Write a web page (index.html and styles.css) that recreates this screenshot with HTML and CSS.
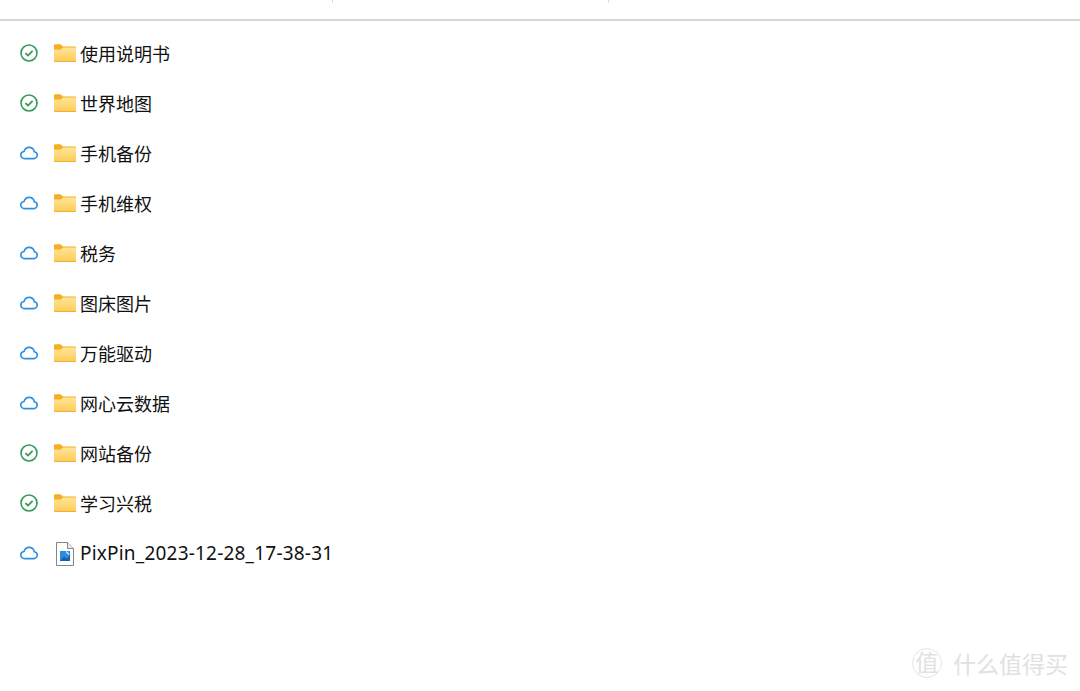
FILE: index.html
```html
<!DOCTYPE html>
<html lang="en">
<head>
    <meta charset="UTF-8">
    <title>文件列表</title>
    <link rel="stylesheet" href="styles.css">
</head>
<body>
    <svg class="defs" width="0" height="0">
        <symbol id="ok" viewBox="0 0 18 18">
            <circle cx="9" cy="9" r="8" fill="none" stroke="#359a55" stroke-width="1.600"/>
            <path d="M5.400 9.100 8 11.600 12.600 6.900" fill="none" stroke="#359a55" stroke-width="1.800"/>
        </symbol>
        <symbol id="cloud" viewBox="0 0 18 18">
            <path d="M4.600 14.600C2.300 14.600.8 12.900.8 11c0-1.800 1.400-3.300 3.200-3.500C4.700 5 6.700 3.400 9.100 3.400c2.700 0 4.700 1.800 5.200 4.300 1.700.2 2.900 1.600 2.900 3.300 0 1.900-1.500 3.600-3.400 3.600z" fill="none" stroke="#2f8fe0" stroke-width="1.600"/>
        </symbol>
        <linearGradient id="folderFill" x1="0" y1="0" x2="0" y2="1">
            <stop offset="0" stop-color="#ffe596"/>
            <stop offset="1" stop-color="#fccb58"/>
        </linearGradient>
        <symbol id="folder" viewBox="0 0 22 18">
            <path d="M0 1.500C0 .8.500.300 1.200.300h5.300L9 2.500h12c.6 0 1 .4 1 1V17c0 .6-.4 1-1 1H1c-.6 0-1-.4-1-1z" fill="#f4b022"/>
            <path d="M0 5.500 7 5.500 9 3.500h12.500c.3 0 .5.200.5.500V17c0 .6-.4 1-1 1H1c-.6 0-1-.4-1-1z" fill="url(#folderFill)"/>
            <path d="M0 17h22v.2c0 .5-.4.800-1 .8H1c-.6 0-1-.3-1-.8z" fill="#eeb02e"/>
        </symbol>
        <symbol id="imgfile" viewBox="0 0 22 24">
            <path d="M2.500.500h11l6 6v17h-17z" fill="#fff" stroke="#858585"/>
            <path d="M13.500.500v6h6" fill="#ececec" stroke="#858585"/>
            <rect x="6" y="9" width="10" height="10" fill="#2f8be0"/>
            <path d="M6 19 10 14.500 13 17 16 13V19z" fill="#1a5fae"/>
            <path d="M12 9.500 15 12.500" stroke="#cfe6ff" stroke-width="1.400"/>
        </symbol>
    </svg>

    <div class="head_bar">
        <span class="head_cell name_col"></span>
        <span class="head_cell date_col"></span>
    </div>

    <ul class="file_list">
        <li><svg class="state"><use href="#ok"/></svg><svg class="type"><use href="#folder"/></svg><span>使用说明书</span></li>
        <li><svg class="state"><use href="#ok"/></svg><svg class="type"><use href="#folder"/></svg><span>世界地图</span></li>
        <li><svg class="state"><use href="#cloud"/></svg><svg class="type"><use href="#folder"/></svg><span>手机备份</span></li>
        <li><svg class="state"><use href="#cloud"/></svg><svg class="type"><use href="#folder"/></svg><span>手机维权</span></li>
        <li><svg class="state"><use href="#cloud"/></svg><svg class="type"><use href="#folder"/></svg><span>税务</span></li>
        <li><svg class="state"><use href="#cloud"/></svg><svg class="type"><use href="#folder"/></svg><span>图床图片</span></li>
        <li><svg class="state"><use href="#cloud"/></svg><svg class="type"><use href="#folder"/></svg><span>万能驱动</span></li>
        <li><svg class="state"><use href="#cloud"/></svg><svg class="type"><use href="#folder"/></svg><span>网心云数据</span></li>
        <li><svg class="state"><use href="#ok"/></svg><svg class="type"><use href="#folder"/></svg><span>网站备份</span></li>
        <li><svg class="state"><use href="#ok"/></svg><svg class="type"><use href="#folder"/></svg><span>学习兴税</span></li>
        <li><svg class="state"><use href="#cloud"/></svg><svg class="type file_icon"><use href="#imgfile"/></svg><span class="file_name">PixPin_2023-12-28_17-38-31</span></li>
    </ul>

    <div class="watermark">
        <span class="wm_logo">值</span>
        <span class="wm_text">什么值得买</span>
    </div>
</body>
</html>
```

FILE: styles.css
```css
html{
    font-family: "Noto Sans","Noto Sans CJK SC",sans-serif;
}
body,ul,li{margin: 0;padding: 0;}
li{list-style: none;}
body{
    background: #fff;
    color: #111;
    height: 691px;
    overflow: hidden;
    position: relative;
}
.defs{display: block;height: 0;}

.head_bar{
    display: flex;
    height: 19px;
    border-bottom: 2px solid #d6d6d6;
}
.head_cell{
    height: 3px;
    border-right: 1px solid #dcdcdc;
}
.name_col{width: 332px;}
.date_col{width: 275px;}

.file_list{
    padding: 8px 0 0 20px;
}
.file_list li{
    display: flex;
    align-items: center;
    height: 50px;
    font-size: 18px;
}
.file_list li span{
    margin-top: -2px;
}
.file_list .state{
    width: 18px;
    height: 18px;
    margin-top: -3px;
    margin-right: 16px;
}
.file_list .type{
    width: 22px;
    height: 18px;
    margin-top: -3px;
    margin-right: 4px;
}
.file_list .file_icon{
    height: 24px;
    margin-top: -1px;
}
.file_list .file_name{
    font-size: 19px;
    letter-spacing: .2px;
}

.watermark{
    position: absolute;
    right: 12px;
    bottom: 11px;
    display: flex;
    align-items: center;
    gap: 11px;
    color: #e1e1e1;
}
.wm_logo{
    width: 28px;
    height: 28px;
    line-height: 26px;
    border: 1px solid #e6e6e6;
    border-radius: 50%;
    text-align: center;
    font-size: 23px;
}
.wm_text{
    font-size: 23px;
}
```
